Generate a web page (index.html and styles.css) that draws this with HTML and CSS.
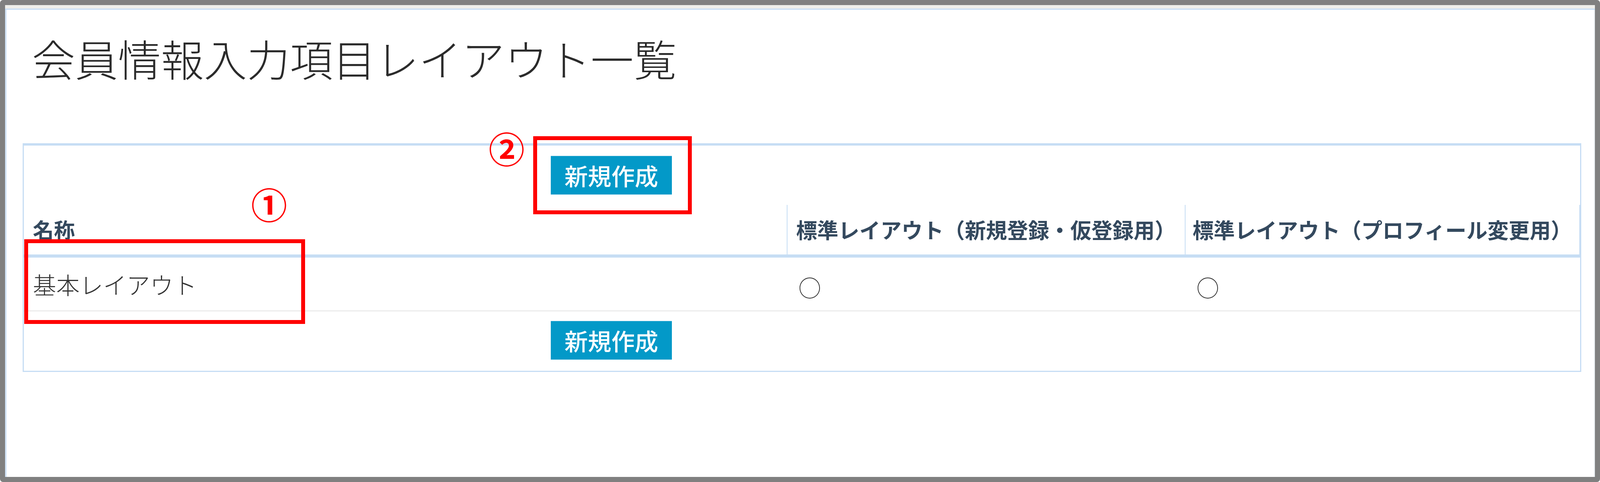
FILE: index.html
```html
<!DOCTYPE html>
<html lang="ja">
<head>
<meta charset="utf-8">
<title>会員情報入力項目レイアウト一覧</title>
<link rel="stylesheet" href="styles.css">
</head>
<body>
<div class="window">
  <div class="topbar"></div>
  <div class="content">
    <h1 class="title">会員情報入力項目レイアウト一覧</h1>
    <table class="layout-table">
      <colgroup>
        <col class="col-name">
        <col class="col-std1">
        <col class="col-std2">
      </colgroup>
      <tbody>
        <tr class="action-row top">
          <td colspan="3"><span class="btn">新規作成</span></td>
        </tr>
        <tr class="head-row">
          <th class="th-name">名称</th>
          <th class="th-std1">標準レイアウト（新規登録・仮登録用）</th>
          <th class="th-std2">標準レイアウト（プロフィール変更用）</th>
        </tr>
        <tr class="data-row">
          <td class="td-name">基本レイアウト</td>
          <td class="td-mark">○</td>
          <td class="td-mark">○</td>
        </tr>
        <tr class="action-row bottom">
          <td colspan="3"><span class="btn">新規作成</span></td>
        </tr>
      </tbody>
    </table>
  </div>
  <div class="callout-box box-one"></div>
  <div class="callout-box box-two"></div>
  <span class="callout-num num-one">①</span>
  <span class="callout-num num-two">②</span>
</div>
</body>
</html>
```

FILE: styles.css
```css
html, body {
  margin: 0;
  padding: 0;
  background: #ffffff;
}

body {
  font-family: "Noto Sans CJK JP", "Noto Sans", sans-serif;
  color: #333333;
}

.window {
  position: relative;
  box-sizing: border-box;
  width: 100%;
  height: 100vh;
  border: 13px solid #808080;
  border-radius: 8px;
  background: #ffffff;
  display: flex;
  flex-direction: column;
  overflow: hidden;
}

.topbar {
  height: 9px;
  background: #eeeeea;
  border-bottom: 3px solid #c6ddf4;
  flex: none;
}

.content {
  flex: 1;
  border-left: 4px solid #d3e5f8;
  border-right: 3px solid #eef2f6;
  display: flex;
  flex-direction: column;
  align-items: flex-start;
}

.title {
  margin: 68px 0 0 65px;
  font-size: 110px;
  line-height: 1;
  font-weight: 300;
  color: #2b2b2b;
  white-space: nowrap;
}

.layout-table {
  margin: 164px 0 0 41px;
  width: calc(100% - 73px);
  table-layout: fixed;
  border-collapse: separate;
  border-spacing: 0;
  border-top: 6px solid #c6ddf4;
  border-left: 3px solid #c6ddf4;
  border-right: 3px solid #c6ddf4;
  border-bottom: 3px solid #c6ddf4;
}

.col-std1 { width: 1019px; }
.col-std2 { width: 1012px; }

.layout-table td,
.layout-table th {
  box-sizing: border-box;
  padding: 0;
  line-height: 1.2;
}

.action-row td {
  padding-left: 1349px;
  vertical-align: top;
}

.action-row.top td {
  padding-top: 26px;
  padding-bottom: 26px;
}

.action-row.bottom td {
  padding-top: 24px;
  padding-bottom: 28px;
}

.btn {
  display: block;
  width: 310px;
  height: 100px;
  box-sizing: border-box;
  background: #0399c8;
  border-top: 1px solid #9fd3ea;
  border-bottom: 1px solid #9fd3ea;
  color: #ffffff;
  font-size: 60px;
  font-weight: 500;
  line-height: 98px;
  text-align: center;
  white-space: nowrap;
}

.head-row th {
  height: 135px;
  text-align: left;
  vertical-align: middle;
  font-size: 54px;
  font-weight: 700;
  color: #34495e;
  white-space: nowrap;
  border-bottom: 8px solid #c6ddf4;
}

.th-name {
  padding-left: 23px !important;
}

.th-std1 {
  padding-left: 22px !important;
  border-left: 2px solid #c6ddf4;
}

.th-std2 {
  padding-left: 18px !important;
  border-left: 2px solid #c6ddf4;
  border-right: 2px solid #c6ddf4;
}

.data-row td {
  height: 138px;
  vertical-align: middle;
  font-size: 60px;
  font-weight: 300;
  color: #333333;
  border-bottom: 3px solid #ececec;
  white-space: nowrap;
}

.td-name {
  padding-left: 23px !important;
}

.td-mark {
  padding-left: 30px !important;
  padding-top: 16px !important;
  font-size: 58px !important;
}

.callout-box {
  position: absolute;
  box-sizing: border-box;
  border: 10px solid #ff0000;
}

.box-one {
  left: 49px;
  top: 600px;
  width: 719px;
  height: 217px;
}

.box-two {
  left: 1352px;
  top: 336px;
  width: 406px;
  height: 200px;
}

.callout-num {
  position: absolute;
  color: #ff0000;
  font-size: 92px;
  font-weight: 700;
  line-height: 1;
}

.num-one {
  left: 630px;
  top: 462px;
}

.num-two {
  left: 1238px;
  top: 319px;
}
```
